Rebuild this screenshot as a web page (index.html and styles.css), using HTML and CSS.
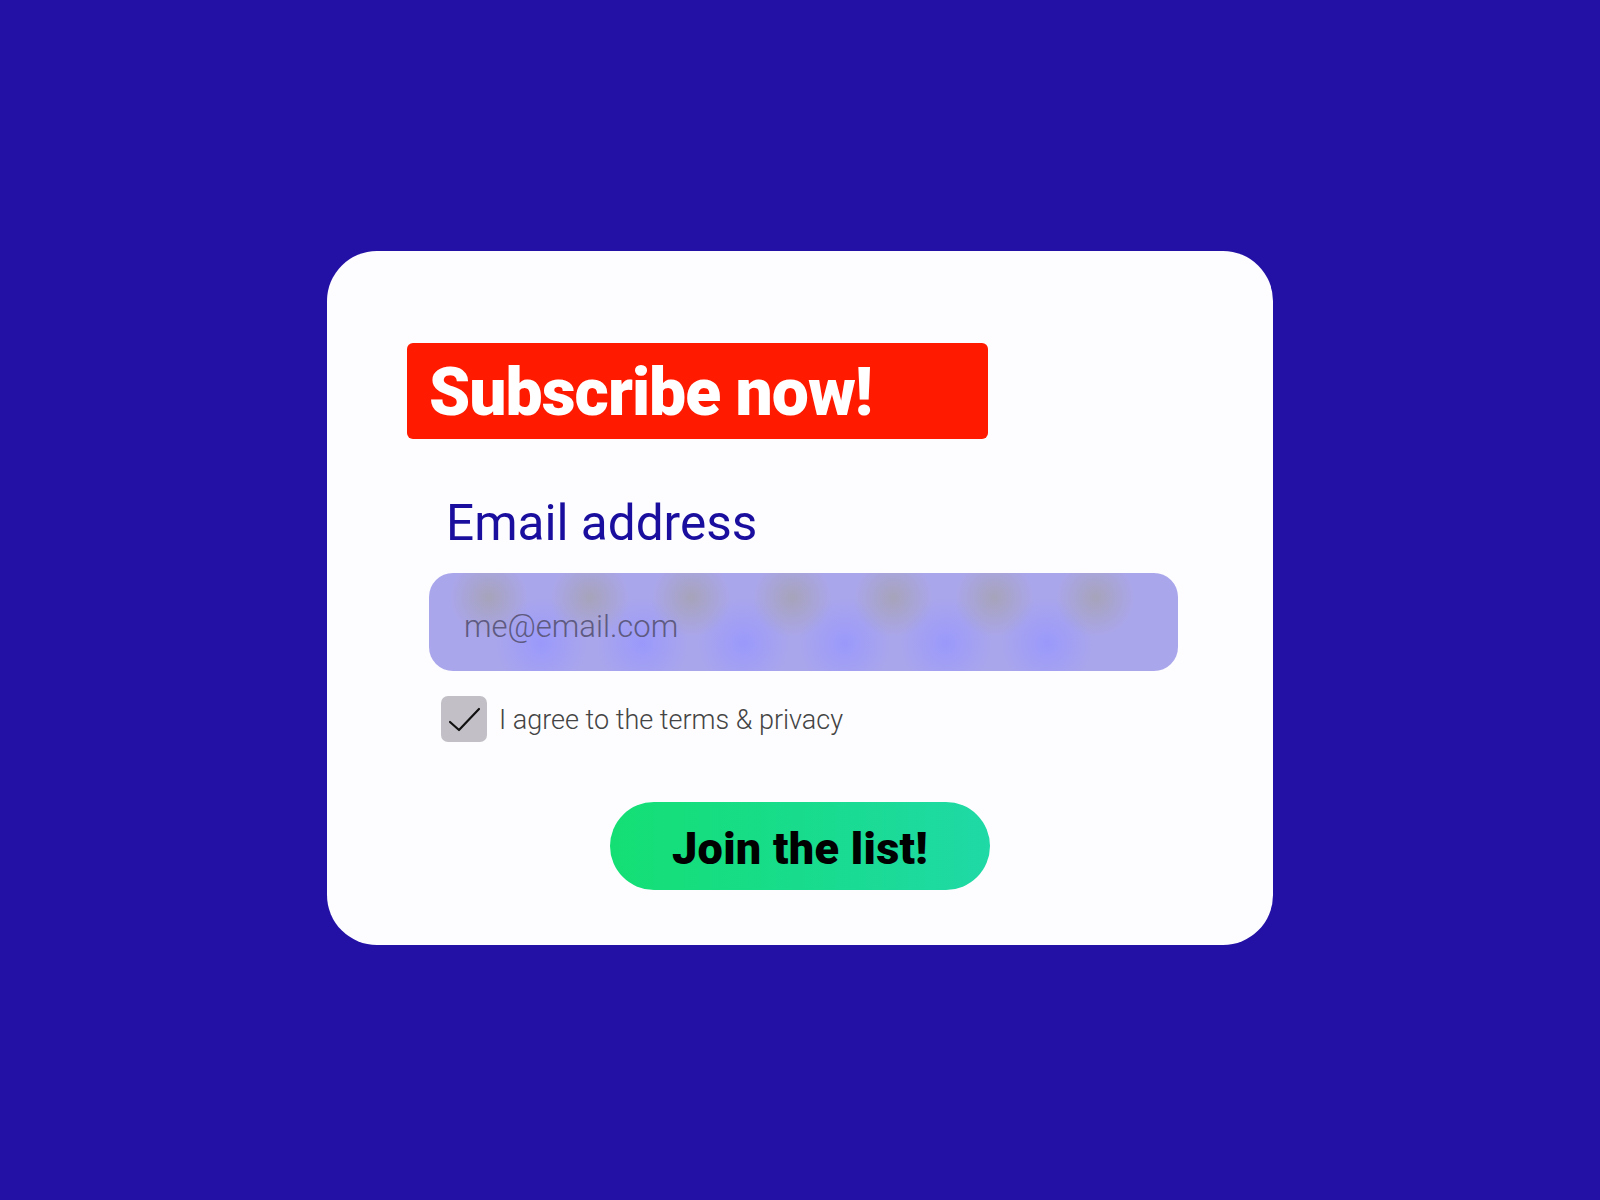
FILE: index.html
```html
<!DOCTYPE html>
<html lang="en">
<head>
<meta charset="utf-8">
<title>Subscribe</title>
<link rel="stylesheet" href="styles.css">
</head>
<body>
<main class="card">
  <div class="banner"><h1 class="banner-title">Subscribe now!</h1></div>
  <label class="field-label" for="email">Email address</label>
  <div class="input-wrap">
    <input id="email" class="email-input" type="text" placeholder="me@email.com">
  </div>
  <div class="agree-row">
    <span class="checkbox">
      <svg width="46" height="46" viewBox="0 0 46 46"><path d="M9 26 L18 34 L38 13" fill="none" stroke="#111" stroke-width="2.2" stroke-linecap="round" stroke-linejoin="round"/></svg>
    </span>
    <span class="agree-text">I agree to the terms &amp; privacy</span>
  </div>
  <div class="actions">
    <button class="join-btn" type="button">Join the list!</button>
  </div>
</main>
</body>
</html>
```
FILE: styles.css
```css
html, body {
  margin: 0;
  padding: 0;
}
body {
  width: 1600px;
  height: 1200px;
  background: #2311a6;
  display: flex;
  align-items: center;
  justify-content: center;
  font-family: "Roboto", "Liberation Sans", sans-serif;
}
.card {
  box-sizing: border-box;
  width: 946px;
  height: 694px;
  margin-top: -4px;
  background: #fdfdff;
  border-radius: 50px;
  padding: 92px 0 0 80px;
  display: flex;
  flex-direction: column;
}
.banner {
  box-sizing: border-box;
  width: 581px;
  height: 96px;
  background: #ff1a00;
  border-radius: 6px;
  padding: 4px 0 0 22px;
  display: flex;
  align-items: center;
}
.banner-title {
  margin: 0;
  color: #fff;
  font-size: 66px;
  font-weight: 900;
  letter-spacing: -1px;
  line-height: 1;
}
.field-label {
  margin: 54px 0 0 39px;
  color: #1a0e9e;
  font-size: 49.5px;
  font-weight: 400;
  line-height: 60px;
}
.input-wrap {
  margin: 20px 0 0 22px;
  width: 749px;
  height: 98px;
  border-radius: 24px;
  overflow: hidden;
  background:
    radial-gradient(circle at 8% 25%, rgba(165,162,170,0.75) 0, rgba(165,162,170,0) 40px),
    radial-gradient(circle at 21.5% 25%, rgba(165,162,170,0.75) 0, rgba(165,162,170,0) 40px),
    radial-gradient(circle at 35% 25%, rgba(165,162,170,0.75) 0, rgba(165,162,170,0) 40px),
    radial-gradient(circle at 48.5% 25%, rgba(165,162,170,0.75) 0, rgba(165,162,170,0) 40px),
    radial-gradient(circle at 62% 25%, rgba(165,162,170,0.75) 0, rgba(165,162,170,0) 40px),
    radial-gradient(circle at 75.5% 25%, rgba(165,162,170,0.75) 0, rgba(165,162,170,0) 40px),
    radial-gradient(circle at 89% 25%, rgba(165,162,170,0.75) 0, rgba(165,162,170,0) 40px),
    radial-gradient(circle at 15% 72%, rgba(150,150,255,0.8) 0, rgba(150,150,255,0) 46px),
    radial-gradient(circle at 28.5% 72%, rgba(150,150,255,0.8) 0, rgba(150,150,255,0) 46px),
    radial-gradient(circle at 42% 72%, rgba(150,150,255,0.8) 0, rgba(150,150,255,0) 46px),
    radial-gradient(circle at 55.5% 72%, rgba(150,150,255,0.8) 0, rgba(150,150,255,0) 46px),
    radial-gradient(circle at 69% 72%, rgba(150,150,255,0.8) 0, rgba(150,150,255,0) 46px),
    radial-gradient(circle at 82.5% 72%, rgba(150,150,255,0.8) 0, rgba(150,150,255,0) 46px),
    #aaa6ec;
}
.email-input {
  box-sizing: border-box;
  width: 100%;
  height: 100%;
  border: 0;
  outline: 0;
  background: transparent;
  padding: 8px 0 0 35px;
  font-family: "Roboto", "Liberation Sans", sans-serif;
  font-size: 31px;
  font-weight: 300;
  color: #555;
}
.email-input::placeholder {
  color: #5e5a80;
  opacity: 1;
}
.agree-row {
  margin: 25px 0 0 34px;
  display: flex;
  align-items: center;
  gap: 12px;
}
.checkbox {
  width: 46px;
  height: 46px;
  border-radius: 7px;
  background: #c2c0c6;
  display: flex;
}
.agree-text {
  color: #444;
  font-size: 27px;
  font-weight: 300;
  padding-top: 2px;
}
.actions {
  margin: 60px 0 0 -80px;
  display: flex;
  justify-content: center;
}
.join-btn {
  width: 380px;
  height: 88px;
  border: 0;
  border-radius: 44px;
  background: linear-gradient(90deg, #14df74 0%, #18dc8c 50%, #1fd9a6 100%);
  color: #000;
  font-family: "Roboto", "Liberation Sans", sans-serif;
  font-size: 45px;
  font-weight: 900;
  letter-spacing: 0.3px;
  cursor: pointer;
  padding: 4px 0 0;
}
```
